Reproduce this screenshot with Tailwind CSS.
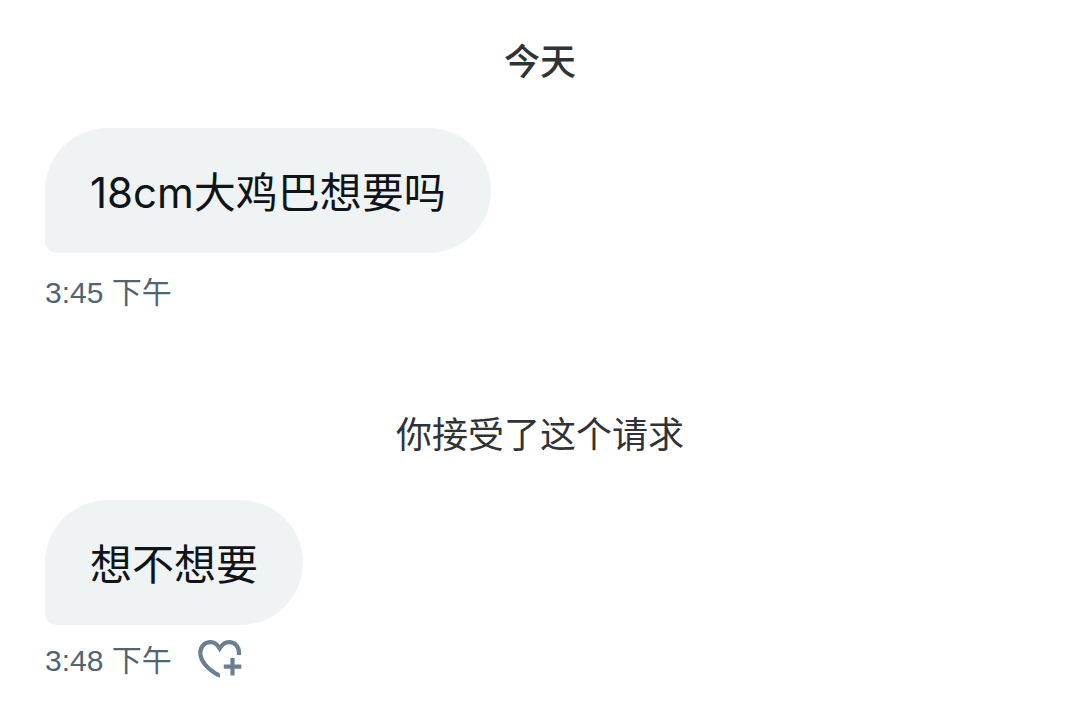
<!DOCTYPE html>
<html lang="zh-CN">
<head>
<meta charset="utf-8">
<meta name="viewport" content="width=device-width, initial-scale=1">
<title>私信</title>
<script src="https://cdn.jsdelivr.net/npm/@tailwindcss/browser@4"></script>
</head>
<body class="bg-white font-['Liberation_Sans','Noto_Sans_CJK_SC',sans-serif]">
<main class="flex flex-col px-[45px] pt-[39px]">
  <h2 class="text-center text-4xl leading-[48px] font-medium text-[#2f3336]">今天</h2>
  <section class="mt-[41px] flex flex-col items-start">
    <p class="rounded-[64px] rounded-bl-[12px] bg-[#eff3f4] px-[45px] pt-[34px] pb-[30px] font-['Inter','Noto_Sans_CJK_SC',sans-serif] text-[42px] leading-[61px] text-[#0f1419]">18cm大鸡巴想要吗</p>
    <time class="mt-5 text-[30px] leading-[40px] text-[#536471]">3:45 下午</time>
  </section>
  <p class="mt-[99px] text-center text-4xl leading-[48px] text-[#2f3336]">你接受了这个请求</p>
  <section class="mt-10 flex flex-col items-start">
    <p class="rounded-[64px] rounded-bl-[12px] bg-[#eff3f4] px-[45px] pt-[34px] pb-[30px] font-['Inter','Noto_Sans_CJK_SC',sans-serif] text-[42px] leading-[61px] text-[#0f1419]">想不想要</p>
    <div class="mt-3.5 flex items-start gap-[26px]">
      <time class="text-[30px] leading-[44px] text-[#536471]">3:48 下午</time>
      <button type="button" aria-label="添加回应" class="text-[#6b7f8e]">
        <svg class="block h-10 w-11" viewBox="0 0 44 40" fill="none" stroke="currentColor" stroke-width="4.2"><path d="M41 16V13.5C41 8 37 3.2 31 3.2C27 3.2 24 5.8 21.7 9.5C19.5 5.8 16.5 3.2 12.5 3.2C6.5 3.2 2.3 8 2.3 13.5C2.3 21.5 9 29.5 20 36"/><path d="M34.5 19v17.5M25.8 27.7h17.500"/><path d="M19 33l3 1.500v4.500l-3.500-1.900z" fill="currentColor" stroke="none"/></svg>
      </button>
    </div>
  </section>
</main>
</body>
</html>
